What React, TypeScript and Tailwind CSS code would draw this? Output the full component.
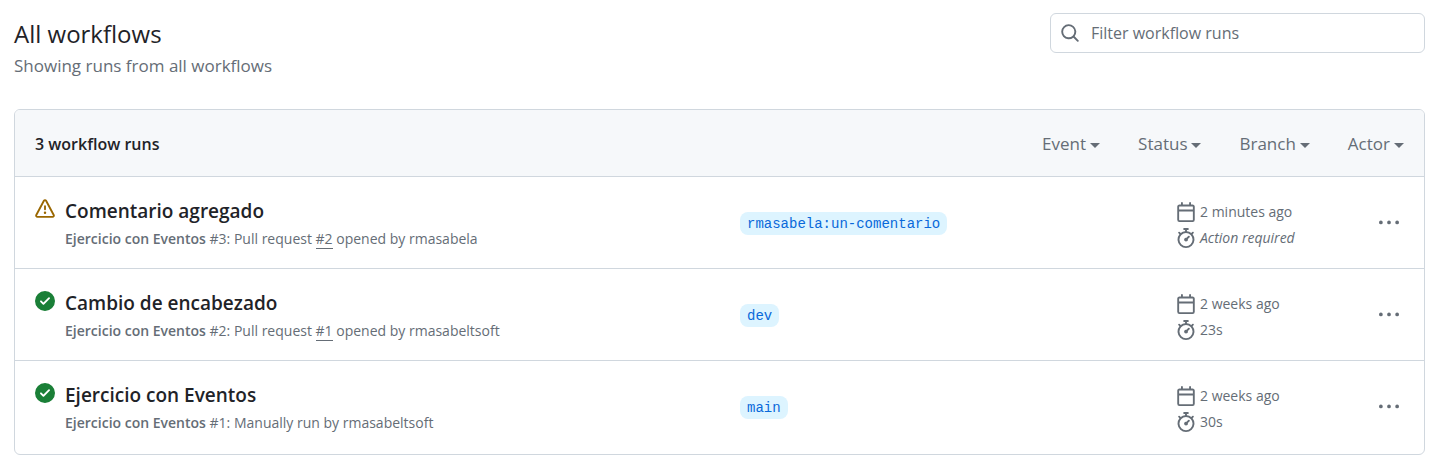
import React from "react";

const paths = {
  search:
    "M10.68 11.74a6 6 0 0 1-7.922-8.982 6 6 0 0 1 8.982 7.922l3.04 3.04a.749.749 0 0 1-.326 1.275.749.749 0 0 1-.734-.215ZM11.5 7a4.499 4.499 0 1 0-8.997 0A4.499 4.499 0 0 0 11.5 7Z",
  alert:
    "M6.457 1.047c.659-1.234 2.427-1.234 3.086 0l6.082 11.378A1.75 1.75 0 0 1 14.082 15H1.918a1.75 1.75 0 0 1-1.543-2.575Zm1.763.707a.25.25 0 0 0-.44 0L1.698 13.132a.25.25 0 0 0 .22.368h12.164a.25.25 0 0 0 .22-.368Zm.53 3.996v2.5a.75.75 0 0 1-1.5 0v-2.5a.75.75 0 0 1 1.5 0ZM9 11a1 1 0 1 1-2 0 1 1 0 0 1 2 0Z",
  check:
    "M8 16A8 8 0 1 1 8 0a8 8 0 0 1 0 16Zm3.78-9.72a.751.751 0 0 0-.018-1.042.751.751 0 0 0-1.042-.018L6.75 9.19 5.28 7.72a.751.751 0 0 0-1.042.018.751.751 0 0 0-.018 1.042l2 2a.75.75 0 0 0 1.06 0Z",
  calendar:
    "M4.75 0a.75.75 0 0 1 .75.75V2h5V.75a.75.75 0 0 1 1.5 0V2h1.25c.966 0 1.75.784 1.75 1.75v10.5A1.75 1.75 0 0 1 13.25 16H2.75A1.75 1.75 0 0 1 1 14.25V3.75C1 2.784 1.784 2 2.75 2H4V.75A.75.75 0 0 1 4.75 0ZM2.5 7.5v6.75c0 .138.112.25.25.25h10.5a.25.25 0 0 0 .25-.25V7.5Zm10.75-4H2.75a.25.25 0 0 0-.25.25V6h11V3.75a.25.25 0 0 0-.25-.25Z",
  stopwatch:
    "M5.75.75A.75.75 0 0 1 6.5 0h3a.75.75 0 0 1 0 1.5h-.75v1l-.001.041a6.724 6.724 0 0 1 3.464 1.435l.007-.006.75-.75a.749.749 0 0 1 1.275.326.749.749 0 0 1-.215.734l-.75.75-.006.007a6.75 6.75 0 1 1-10.548 0L2.72 5.03l-.75-.75a.751.751 0 0 1 .018-1.042.751.751 0 0 1 1.042-.018l.75.75.007.006A6.72 6.72 0 0 1 7.25 2.541V1.5H6.5a.75.75 0 0 1-.75-.75ZM8 14.5a5.25 5.25 0 1 0-.001-10.501A5.25 5.25 0 0 0 8 14.5Zm.389-6.7 1.33-1.33a.75.75 0 1 1 1.061 1.06L9.45 8.861A1.503 1.503 0 0 1 8 10.75a1.499 1.499 0 1 1 .389-2.95Z",
  kebab:
    "M8 9a1.5 1.5 0 1 0 0-3 1.5 1.5 0 0 0 0 3ZM1.5 9a1.5 1.5 0 1 0 0-3 1.5 1.5 0 0 0 0 3Zm13 0a1.5 1.5 0 1 0 0-3 1.5 1.5 0 0 0 0 3Z",
};

function Icon({ name, className = "" }: { name: keyof typeof paths; className?: string }) {
  return (
    <svg viewBox="0 0 16 16" fill="currentColor" aria-hidden="true" className={`size-5 shrink-0 ${className}`}>
      <path d={paths[name]} />
    </svg>
  );
}

type Run = {
  title: string;
  number: number;
  pullRequest?: number;
  actor: string;
  branch: string;
  when: string;
  duration: string;
  pending?: boolean;
};

const runs: Run[] = [
  {
    title: "Comentario agregado",
    number: 3,
    pullRequest: 2,
    actor: "rmasabela",
    branch: "rmasabela:un-comentario",
    when: "2 minutes ago",
    duration: "Action required",
    pending: true,
  },
  {
    title: "Cambio de encabezado",
    number: 2,
    pullRequest: 1,
    actor: "rmasabeltsoft",
    branch: "dev",
    when: "2 weeks ago",
    duration: "23s",
  },
  {
    title: "Ejercicio con Eventos",
    number: 1,
    actor: "rmasabeltsoft",
    branch: "main",
    when: "2 weeks ago",
    duration: "30s",
  },
];

const filters = ["Event", "Status", "Branch", "Actor"];

function RunRow({ run }: { run: Run }) {
  return (
    <li className="grid min-h-23 grid-cols-[705fr_436fr_198fr_30px] items-center border-t border-[#d0d7de] px-5">
      <div className="flex gap-2.5 pt-1">
        <Icon name={run.pending ? "alert" : "check"} className={run.pending ? "text-[#9a6700]" : "text-[#1a7f37]"} />
        <div>
          <a href="#run" className="block text-[19px] leading-6 font-semibold text-[#1f2328]">
            {run.title}
          </a>
          <p className="mt-1 text-sm leading-6">
            <span className="font-semibold">Ejercicio con Eventos</span> #{run.number}:{" "}
            {run.pullRequest ? (
              <>
                Pull request{" "}
                <a href="#pull" className="border-b border-[#656d76]">
                  #{run.pullRequest}
                </a>{" "}
                opened by {run.actor}
              </>
            ) : (
              <>Manually run by {run.actor}</>
            )}
          </p>
        </div>
      </div>
      <div className="flex pt-px">
        <a
          href="#branch"
          className="rounded-lg bg-[#ddf4ff] px-[7px] pt-0.5 font-['Liberation_Mono',monospace] text-sm leading-[21px] text-[#0969da]"
        >
          {run.branch}
        </a>
      </div>
      <div className="flex flex-col pt-[5px] text-sm leading-[26px]">
        <div className="flex items-center gap-1">
          <Icon name="calendar" />
          {run.when}
        </div>
        <div className="flex items-center gap-1">
          <Icon name="stopwatch" />
          <span className={run.pending ? "italic" : ""}>{run.duration}</span>
        </div>
      </div>
      <button type="button" aria-label="Show options" className="flex h-8 items-center justify-center">
        <Icon name="kebab" />
      </button>
    </li>
  );
}

export default function App() {
  return (
    <main className="bg-white pt-[13px] pr-[11px] pb-2 pl-3.5 font-['Open_Sans',sans-serif] text-[#656d76]">
      <header className="flex items-start justify-between">
        <div className="pt-[3px]">
          <h1 className="text-2xl leading-9 text-[#1f2328]">All workflows</h1>
          <p className="text-[17px] leading-7">Showing runs from all workflows</p>
        </div>
        <label className="flex h-10 w-[375px] items-center gap-[11px] rounded-md border border-[#d0d7de] px-[9px]">
          <Icon name="search" />
          <input
            type="text"
            aria-label="Filter workflow runs"
            placeholder="Filter workflow runs"
            className="min-w-0 flex-1 bg-transparent text-base outline-none placeholder:text-[#656d76]"
          />
        </label>
      </header>

      <section className="mt-[29px] overflow-hidden rounded-md border border-[#d0d7de]">
        <div className="flex h-[66px] items-center justify-between bg-[#f6f8fa] px-5 pt-0.5">
          <h2 className="text-base font-semibold text-[#1f2328]">3 workflow runs</h2>
          <div className="flex gap-[38px] text-[17px]">
            {filters.map((filter) => (
              <button key={filter} type="button" className="flex items-center gap-1">
                {filter}
                <svg viewBox="0 0 10 5" fill="currentColor" aria-hidden="true" className="mt-0.5 h-[5px] w-2.5">
                  <path d="M0 0h10L5 5Z" />
                </svg>
              </button>
            ))}
          </div>
        </div>
        <ul className="pb-0.5">
          {runs.map((run) => (
            <RunRow key={run.number} run={run} />
          ))}
        </ul>
      </section>
    </main>
  );
}
